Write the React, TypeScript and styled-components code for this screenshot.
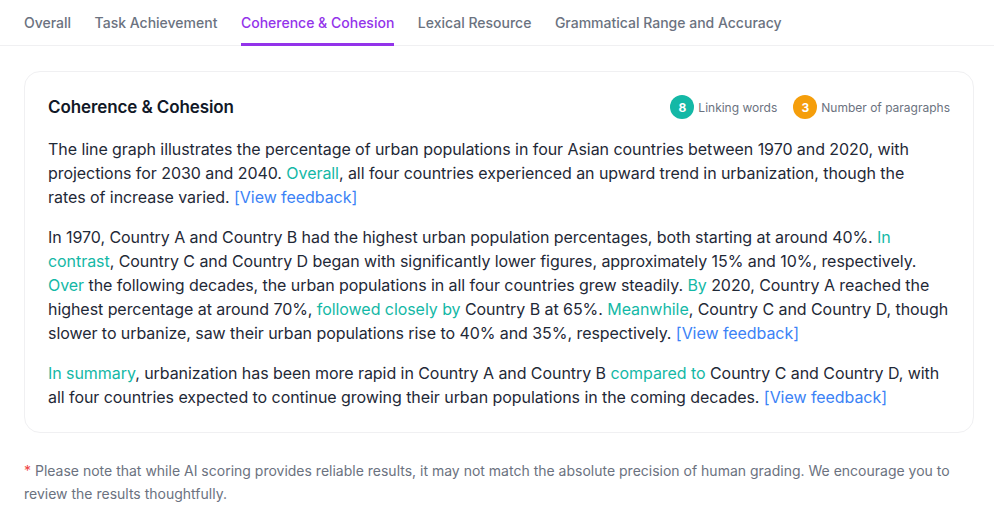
import React from "react";
import styled, { createGlobalStyle } from "styled-components";

const Global = createGlobalStyle`
  html, body { margin: 0; padding: 0; background: #ffffff; }
  body { font-family: Inter, "Noto Sans", sans-serif; color: #1f2937; -webkit-font-smoothing: antialiased; }
  * { box-sizing: border-box; }
`;

const Page = styled.div`
  display: flex;
  flex-direction: column;
  width: 994px;
`;

const TabBar = styled.nav`
  display: flex;
  gap: 23.5px;
  padding: 0 24px;
  border-bottom: 1px solid #f0f0f2;
`;

const Tab = styled.div<{ $active?: boolean }>`
  font-size: 14px;
  line-height: 20px;
  font-weight: 500;
  padding: 13px 0 10px;
  color: ${(p) => (p.$active ? "#9333ea" : "#6b7280")};
  border-bottom: 3px solid ${(p) => (p.$active ? "#9333ea" : "transparent")};
  margin-bottom: -1px;
  white-space: nowrap;
`;

const Content = styled.div`
  padding: 25px 20px 0 24px;
  display: flex;
  flex-direction: column;
`;

const Card = styled.section`
  border: 1px solid #f0f0f2;
  border-radius: 16px;
  padding: 23px;
  display: flex;
  flex-direction: column;
  gap: 16px;
`;

const Header = styled.div`
  display: flex;
  align-items: center;
  justify-content: space-between;
  height: 24px;
  margin-bottom: 2px;
`;

const Title = styled.h2`
  margin: 0;
  font-size: 17px;
  line-height: 24px;
  font-weight: 600;
  color: #111827;
  letter-spacing: -0.1px;
`;

const Stats = styled.div`
  display: flex;
  align-items: center;
  gap: 16px;
`;

const Stat = styled.div`
  display: flex;
  align-items: center;
  gap: 4px;
  font-size: 12px;
  color: #6b7280;
`;

const Dot = styled.span<{ $color: string }>`
  width: 24px;
  height: 24px;
  border-radius: 50%;
  background: ${(p) => p.$color};
  color: #fff;
  font-weight: 700;
  font-size: 12px;
  display: inline-flex;
  align-items: center;
  justify-content: center;
`;

const Para = styled.p`
  margin: 0;
  font-size: 16px;
  line-height: 24px;
  letter-spacing: -0.06px;
  color: #1f2937;
`;

const Link = styled.span`
  color: #14b8a6;
`;

const Feedback = styled.a`
  color: #3b82f6;
  text-decoration: none;
  cursor: pointer;
`;

const Note = styled.p`
  margin: 26px 0 0;
  font-size: 14px;
  line-height: 23px;
  color: #6b7280;
`;

const Star = styled.span`
  color: #ef4444;
`;

export default function App() {
  return (
    <Page>
      <Global />
      <TabBar>
        <Tab>Overall</Tab>
        <Tab>Task Achievement</Tab>
        <Tab $active>Coherence &amp; Cohesion</Tab>
        <Tab>Lexical Resource</Tab>
        <Tab>Grammatical Range and Accuracy</Tab>
      </TabBar>
      <Content>
        <Card>
          <Header>
            <Title>Coherence &amp; Cohesion</Title>
            <Stats>
              <Stat>
                <Dot $color="#14b8a6">8</Dot>
                Linking words
              </Stat>
              <Stat>
                <Dot $color="#f59e0b">3</Dot>
                Number of paragraphs
              </Stat>
            </Stats>
          </Header>
          <Para>
            The line graph illustrates the percentage of urban populations in four Asian countries between 1970 and 2020, with
            projections for 2030 and 2040. <Link>Overall</Link>, all four countries experienced an upward trend in urbanization, though the
            <br />
            rates of increase varied. <Feedback>[View feedback]</Feedback>
          </Para>
          <Para>
            In 1970, Country A and Country B had the highest urban population percentages, both starting at around 40%.{" "}
            <Link>In contrast</Link>, Country C and Country D began with significantly lower figures, approximately 15% and 10%, respectively.{" "}
            <Link>Over</Link> the following decades, the urban populations in all four countries grew steadily. <Link>By</Link> 2020, Country A reached the
            highest percentage at around 70%, <Link>followed closely by</Link> Country B at 65%. <Link>Meanwhile</Link>, Country C and Country D, though
            slower to urbanize, saw their urban populations rise to 40% and 35%, respectively. <Feedback>[View feedback]</Feedback>
          </Para>
          <Para>
            <Link>In summary</Link>, urbanization has been more rapid in Country A and Country B <Link>compared to</Link> Country C and Country D, with
            all four countries expected to continue growing their urban populations in the coming decades. <Feedback>[View feedback]</Feedback>
          </Para>
        </Card>
        <Note>
          <Star>*</Star> Please note that while AI scoring provides reliable results, it may not match the absolute precision of human grading. We encourage you to
          review the results thoughtfully.
        </Note>
      </Content>
    </Page>
  );
}
